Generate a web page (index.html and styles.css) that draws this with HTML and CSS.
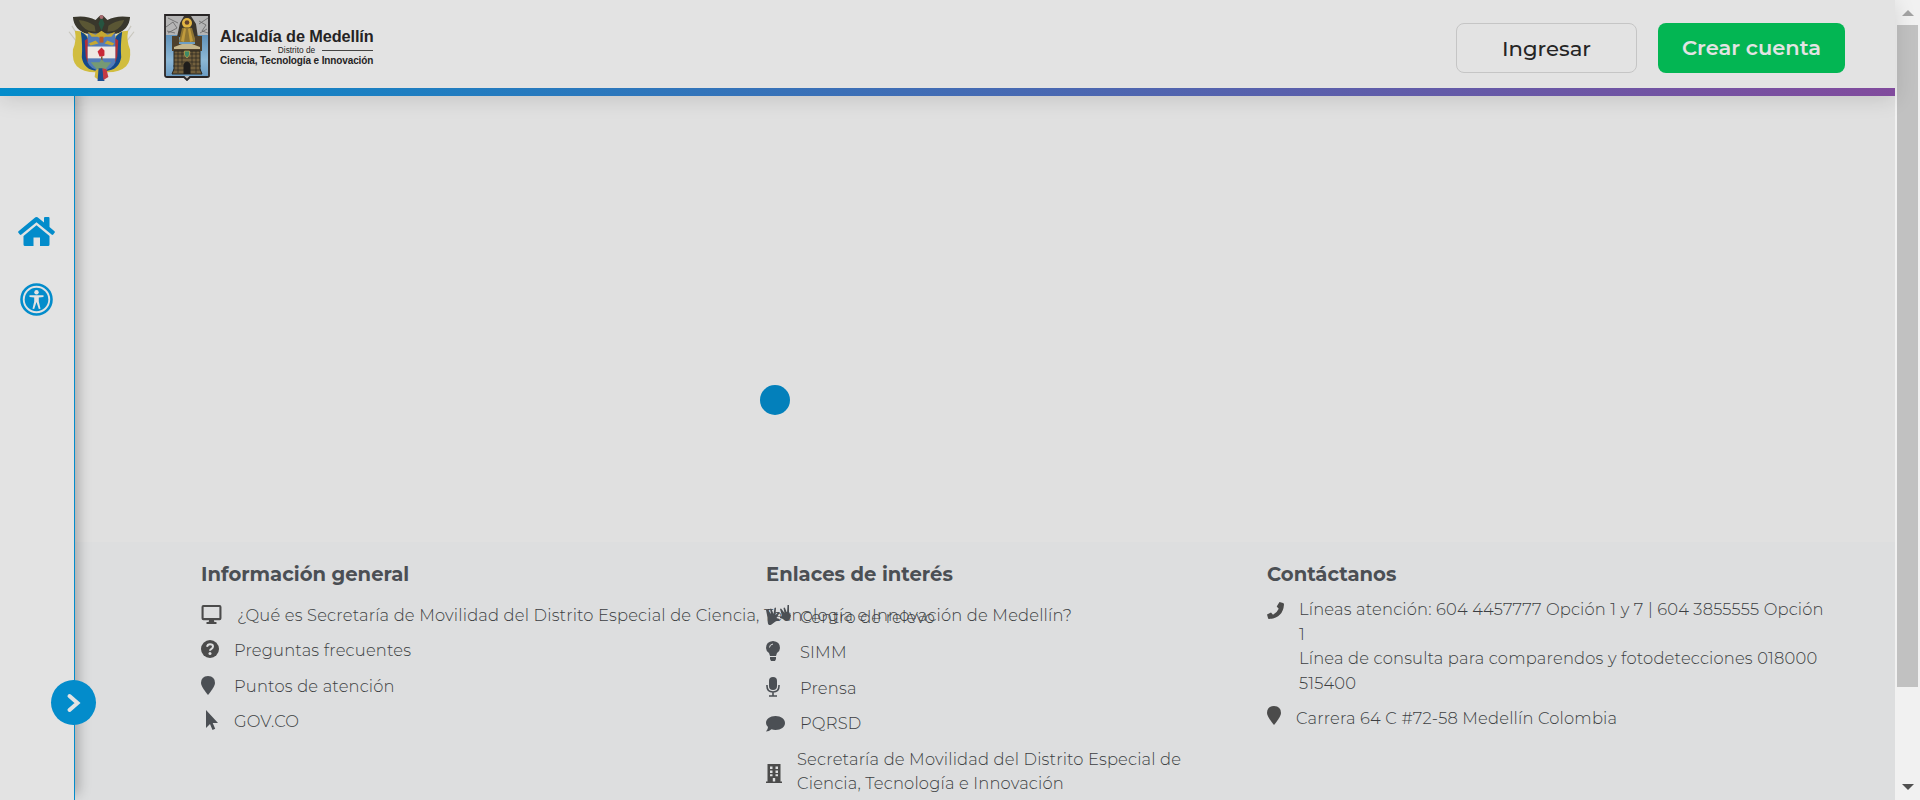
FILE: index.html
```html
<!DOCTYPE html>
<html lang="es">
<head>
<meta charset="utf-8">
<title>Secretaría de Movilidad de Medellín</title>
<link rel="stylesheet" href="styles.css">
</head>
<body>
<div class="page">
  <header class="header">
    <div class="brand">
      <svg class="crest" viewBox="0 0 68 70">
        <g fill="none" stroke="#c9c7be" stroke-width="1.2"><path d="M8 27 1 18M12 25 4 12M60 27l7-9M56 25l8-13"/></g>
        <path fill="#39372c" d="M5 3q14-2 23 3l4-4 2-1 2 1 4 4q9-5 23-3-1 13-14 17H19Q6 16 5 3Z"/>
        <path fill="#5a5634" d="M11 6q10 1 16 6l1 6-7-1Q13 13 11 6Zm46 0q-10 1-16 6l-1 6 7-1q8-4 10-11Z"/>
        <path d="m34 2-3 8 3 7 3-7Z" fill="#265440"/><circle cx="34" cy="3" r="2" fill="#a76b70"/>
        <path fill="#d1bd3f" d="M7 17q11 0 15 9v22l10 11q-16 1-23-6-5-5-4-17 4-9 2-19Zm54 0q-11 0-15 9v22L36 59q16 1 23-6 5-5 4-17-4-9-2-19Z"/>
        <path fill="#14498b" d="M13 18q7 3 8 10v20l9 10q-14-1-16-14 1-12-1-26Zm42 0q-7 3-8 10v20l-9 10q14-1 16-14-1-12 1-26Z"/>
        <path fill="#b13038" d="m17 27 4-3v20l8 12q-9-3-11-13Zm34 0-4-3v20l-8 12q9-3 11-13Z"/>
        <path fill="#527cb9" d="M20 20h28v29q-2 7-14 9-12-2-14-9Z"/>
        <path fill="#eee8e3" d="M20 33h28v12H20Z"/>
        <path fill="#c6a832" d="m20 18 8 3 6-4 6 4 8-3-4 5-6 0-4 2-4-2-6 0ZM21 30l7-3 3 3-8 2Zm26 0-7-3-3 3 8 2Z"/>
        <path fill="#b85a2b" d="M32 23h4v6h-4Z"/>
        <path fill="#c92938" d="m34 34 3 3v5l-2 1h-3l-2-5Z"/><path fill="#7a5a35" d="M33.500 43h1.500v6h-1.500Z"/>
        <path fill="#769a73" d="M23 49h9l2-3 3 3h7l-6 7h-9Z"/>
        <path fill="#d0b83f" d="m28 57 4-2-1 12-4-3Z"/><path fill="#1c4e90" d="M31 55h4l2 13h-7Z"/><path fill="#c53a42" d="m35 55 4 1 2 8-5 3Z"/>
      </svg>
      <svg class="shield" viewBox="0 0 46 67">
        <defs><linearGradient id="sky" x2="0" y2="1"><stop stop-color="#5f91b9"/><stop offset=".6" stop-color="#8db8d6"/><stop offset="1" stop-color="#6c9dc4"/></linearGradient></defs>
        <path fill="#b5b5b5" stroke="#282526" stroke-width="1.800" d="M1 1h44v61q0 1-2 1H26l-3 3-3-3H3q-2 0-2-2Z"/>
        <path fill="url(#sky)" d="M2 21h42v41H2Z"/>
        <path fill="none" stroke="#666" stroke-width=".8" d="m2 13 7-5 4 6-9 5M35 7l7 4-4 6 6 2M4 4l10 5M44 4l-9 6M3 17l8 2M36 19l7-4"/>
        <path fill="#39342c" d="m13 23 3-14 4-7h7l5 8 2 14Z"/>
        <circle cx="23" cy="9" r="5" fill="#e3b643"/><circle cx="23" cy="8.500" r="2.300" fill="#63422d"/>
        <path fill="#8f7533" d="m18 14 5-1 5 1 4 14H15Z"/><path fill="#c19b3c" d="m20 14-3 13 3 1 2-13Zm6 0 3 13-3 1-2-13Z"/>
        <path fill="#4e402c" d="M8 22h7v8h16v-8h7v15H8Z"/><path fill="#c5b68c" d="m10 33 8-3h10l8 3v2H10Z"/>
        <path fill="#73603d" stroke="#27251f" d="M10 37h26v18l2 5H8l2-5Z"/>
        <path stroke="#27251f" stroke-width=".7" d="M10 40h26M10 44h26M10 48h26M9 52h28M9 56h28M14 37v22M32 37v22M18 37v14M28 37v14"/>
        <path fill="#3f8a67" stroke="#c1a348" stroke-width=".7" d="M20.500 37h5v4L23 44l-2.500-3Z"/><path fill="#1f1d1b" d="M19.500 60V50q3.500-5 7 0v10Z"/>
      </svg>
      <div class="city">
        <div class="city-name">Alcaldía de Medellín</div>
        <div class="city-mid">Distrito de</div>
        <div class="city-sub">Ciencia, Tecnología e Innovación</div>
      </div>
    </div>
    <div class="actions">
      <a class="btn">Ingresar</a>
      <a class="btn btn-primary">Crear cuenta</a>
    </div>
  </header>
  <div class="body">
    <aside class="side">
      <svg class="home" viewBox="0 0 37 29"><path d="M18.500 8.200 31.500 19v8.500q0 1.500-1.500 1.500h-8v-8.500h-6.500V29H7q-1.500 0-1.500-1.500V19Z"/><path d="M16.500 .9q2-1.600 4 0L26 5.400V1q0-1 1-1h3.500q1 0 1 1v9l5 4.200q.8.800.1 1.600l-1.400 1.700q-.8.800-1.600.1L18.500 5.200 3.400 17.600q-.8.700-1.600-.1L.4 15.800q-.7-.8.100-1.600Z"/></svg>
      <svg class="access" viewBox="0 0 33 33"><circle cx="16.500" cy="16.500" r="15" fill="none" stroke="#038ccb" stroke-width="2.600"/><circle cx="16.500" cy="16.500" r="11.800"/><g fill="#e3e3e3"><circle cx="16.500" cy="9.300" r="2.200"/><path d="M9.500 12.300h14v1.600l-4.700.6v4l1.700 7.200-1.700.4-2.300-7-2.300 7-1.700-.4 1.700-7.200v-4l-4.700-.6Z"/></g></svg>
      <div class="toggle"><svg viewBox="0 0 45 45"><path d="m18.500 16 8 7-8 7" fill="none" stroke="#e3e3e3" stroke-width="4" stroke-linecap="round"/></svg></div>
    </aside>
    <main class="main">
      <section class="stage"><div class="loader"></div></section>
      <footer class="footer">
        <section class="col general">
          <h2>Información general</h2>
          <ul>
            <li class="about"><svg class="icon gray" viewBox="0 0 21 20"><path fill-rule="evenodd" d="M2 0h17q2 0 2 2v12q0 2-2 2h-6l.5 2H15q1 0 1 1t-1 1H6q-1 0-1-1t1-1h1.500l.5-2H2q-2 0-2-2V2Q0 0 2 0Zm.200 2.200v11.600h16.600V2.200Z"/></svg><span>¿Qué es Secretaría de Movilidad del Distrito Especial de Ciencia, Tecnología e Innovación de Medellín?</span></li>
            <li class="faq"><svg class="icon gray" viewBox="0 0 18 18"><circle cx="9" cy="9" r="9"/><path d="M6 6.800q.5-2.600 3-2.600 3 0 3 2.300 0 1.500-1.500 2.300Q9 9.600 9 10.800" fill="none" stroke="#dddedf" stroke-width="2"/><circle cx="9" cy="13.500" r="1.500" fill="#dddedf"/></svg><span>Preguntas frecuentes</span></li>
            <li class="points"><svg class="icon" viewBox="0 0 14 19"><path d="M7 0q7 .3 7 7 0 3-5 9.500L7 19l-2-2.500Q0 10 0 7 0 .3 7 0Z"/></svg><span>Puntos de atención</span></li>
            <li class="gov"><svg class="icon" viewBox="0 0 12 20"><path d="M0 0v18l4-4 2.500 6 2.700-1.200L6.700 13H12Z"/></svg><span>GOV.CO</span></li>
          </ul>
        </section>
        <section class="col links">
          <h2>Enlaces de interés</h2>
          <ul>
            <li class="relay"><svg class="icon" viewBox="0 0 25 20"><path d="M0 5q1-1 2 0l3 4-1-5q1-1 1.500 0l2 5 1-6q1-1 1.500 0l-.5 7 3-3q1 0 1 1l-3 5 3 1v1l-4 1.500-4 3q-2 1-3 0-1-1-1-7Z"/><path d="M14 4q1-1 1.500 0l3 4-1-5q1-1 1.500 0l2 5 .5-8q1-.5 1.500 0v8l2 2q0 3-2 5-4 2-6-1l-3-1v-1l2-1Z"/></svg><span>Centro de relevo</span></li>
            <li class="simm"><svg class="icon" viewBox="0 0 14 20"><path d="M7 0q7 .5 7 7 0 3-3 5l-1 3H4l-1-3Q0 10 0 7 0 .5 7 0ZM4 16h6v2l-1 2H5l-1-2Z"/><path d="M3.500 6.500q0-3 3.500-3.500" fill="none" stroke="#dddedf"/></svg><span>SIMM</span></li>
            <li class="press"><svg class="icon" viewBox="0 0 14 20"><rect x="3" width="8" height="13" rx="4"/><path d="M1 8v1q0 6 6 6t6-6V8M7 15v4M3 19h8" fill="none" stroke="#4b4f54" stroke-width="1.600"/></svg><span>Prensa</span></li>
            <li class="pqrsd"><svg class="icon" viewBox="0 0 19 16"><path d="M9.500 0C15 0 19 3 19 7s-4 7-9.500 7q-2 0-4-.7Q3 15.500 0 15.500 2 13.500 2 11 0 9.500 0 7c0-4 4-7 9.500-7Z"/></svg><span>PQRSD</span></li>
            <li class="office"><svg class="icon gray" viewBox="0 0 16 19"><path fill-rule="evenodd" d="M1.500 0h13v17.500H16V19H0v-1.500h1.500ZM4 2.500V5h2.500V2.500Zm5.500 0V5H12V2.500ZM4 6.500V9h2.500V6.500Zm5.500 0V9H12V6.500ZM4 10.300v2h2.500v-2Zm5.500 0v2H12v-2ZM6.800 14v3.500h2.400V14Z"/></svg><div><div>Secretaría de Movilidad del Distrito Especial de</div><div>Ciencia, Tecnología e Innovación</div></div></li>
          </ul>
        </section>
        <section class="col contact">
          <h2>Contáctanos</h2>
          <ul>
            <li class="phone"><svg class="icon gray" viewBox="0 0 17 17"><path d="m12.500 0 3.500 1q1 0 1 1.500Q16 16 2 17q-1 0-1-1l-1-3.500 4-2 2 2.200q4-2 5.700-6L9.700 4.500Z"/></svg><div><div>Líneas atención: 604 4457777 Opción 1 y 7 | 604 3855555 Opción</div><div>1</div><div>Línea de consulta para comparendos y fotodetecciones 018000</div><div>515400</div></div></li>
            <li class="address"><svg class="icon gray" viewBox="0 0 14 19"><path d="M7 0q7 .3 7 7 0 3-5 9.500L7 19l-2-2.500Q0 10 0 7 0 .3 7 0Z"/></svg><span>Carrera 64 C #72-58 Medellín Colombia</span></li>
          </ul>
        </section>
      </footer>
    </main>
  </div>
</div>
<div class="scroll"><svg class="arrow" viewBox="0 0 12 6"><path fill="#a3a3a3" d="M0 6 6 0l6 6Z"/></svg><div class="thumb"></div><svg class="arrow down" viewBox="0 0 12 6"><path fill="#505050" d="M0 0h12L6 6Z"/></svg></div>
</body>
</html>
```
FILE: styles.css
```css
* { box-sizing: border-box; }
body { margin: 0; height: 800px; display: flex; overflow: hidden; background: #e0e0e0; font: 300 16.32px/24.6px Montserrat, Inter, "Open Sans", sans-serif; color: #3c3e42; }
.page { width: 1895px; height: 800px; display: flex; flex-direction: column; }

.header { position: relative; z-index: 2; flex: 0 0 96px; display: flex; justify-content: space-between; padding: 0 50px 0 68px; background: linear-gradient(90deg, #038ccb, #814b9d) 0 88px / 100% 8px no-repeat #e3e3e3; box-shadow: 0 3px 20px rgba(0,0,0,.13); }
.brand { display: flex; align-items: flex-start; }
.crest { width: 67px; height: 69px; margin-top: 14px; }
.shield { width: 46px; height: 67px; margin: 14px 0 0 29px; }
.city { margin: 26px 0 0 10px; width: 153px; font-family: "Liberation Sans", Arial, sans-serif; font-weight: 700; color: #252324; white-space: nowrap; }
.city-name { font-size: 16.3px; line-height: 20px; letter-spacing: -.1px; }
.city-mid { display: flex; align-items: center; justify-content: space-between; font-size: 8.300px; line-height: 9px; font-weight: 400; }
.city-mid::before, .city-mid::after { content: ""; width: 51px; height: 1px; background: #444; }
.city-sub { font-size: 10px; line-height: 12px; letter-spacing: -.12px; }
.actions { display: flex; gap: 21px; padding-top: 23px; }
.btn { display: flex; align-items: center; justify-content: center; width: 181px; height: 50px; border: 1px solid #c5c5c5; border-radius: 8px; font-size: 21.2px; font-weight: 500; color: #252525; }
.btn-primary { width: 187px; border: 0; background: #03b653; color: #e3e3e3; font-size: 21px; font-weight: 600; }

.body { flex: 1; display: flex; min-height: 0; }
.side { position: relative; z-index: 1; flex: 0 0 75px; display: flex; flex-direction: column; align-items: center; padding: 121px 1px 0 0; border-right: 1px solid #038ccb; background: #e3e3e3; box-shadow: 3px -6px 12px rgba(0,0,0,.28); fill: #038ccb; }
.home { width: 37px; height: 29px; }
.access { width: 33px; height: 33px; margin-top: 37px; }
.toggle { position: absolute; left: 51px; top: 584px; width: 45px; height: 45px; border-radius: 50%; background: #038ccb; }
.main { flex: 1; display: flex; flex-direction: column; min-width: 0; }
.stage { flex: 0 0 446px; padding: 289px 0 0 685px; }
.loader { width: 30px; height: 30px; border-radius: 50%; background: #0380bb; }

.footer { flex: 1; display: grid; grid-template-columns: 565px 501px 1fr; padding: 19px 0 0 126px; background: #dddedf; }
.footer h2 { margin: 0; font-size: 19.58px; line-height: 26px; font-weight: 700; color: #4b4f54; }
.footer ul { list-style: none; margin: 0; padding: 0; }
.footer li { display: flex; align-items: flex-start; height: 35.4px; white-space: nowrap; letter-spacing: .185px; }
.icon { flex: none; width: 14px; height: 19px; margin-top: 2px; fill: #4b4f54; }
.gray { fill: #4b4b4b; }

.general ul { padding-top: 16px; }
.about .icon { width: 21px; margin-right: 15px; }
.faq .icon { width: 18px; height: 18px; margin-right: 15px; }
.points .icon { margin-right: 19px; }
.gov .icon { width: 12px; height: 20px; margin: 1px 16px 0 5px; }

.links ul { padding-top: 18px; }
.relay .icon { width: 25px; height: 20px; margin: 0 9px 0 0; }
.simm .icon, .press .icon { height: 20px; margin: 1px 20px 0 0; }
.pqrsd .icon { width: 19px; height: 16px; margin: 5px 15px 0 0; }
.office .icon { width: 16px; margin: 17px 15px 0 0; }
.footer .office { height: 50px; }

.contact ul { padding-top: 10px; }
.footer .phone { height: 109px; }
.phone .icon { width: 17px; height: 17px; margin: 5px 15px 0 0; }
.address .icon { margin: 0 15px 0 0; }

.scroll { width: 25px; height: 800px; background: #f1f1f1; display: flex; flex-direction: column; align-items: center; }
.arrow { width: 12px; height: 6px; margin: 10px 0 9px; flex: none; }
.thumb { width: 21px; height: 662px; background: #c1c1c1; }
.down { margin-top: 97px; }
```
